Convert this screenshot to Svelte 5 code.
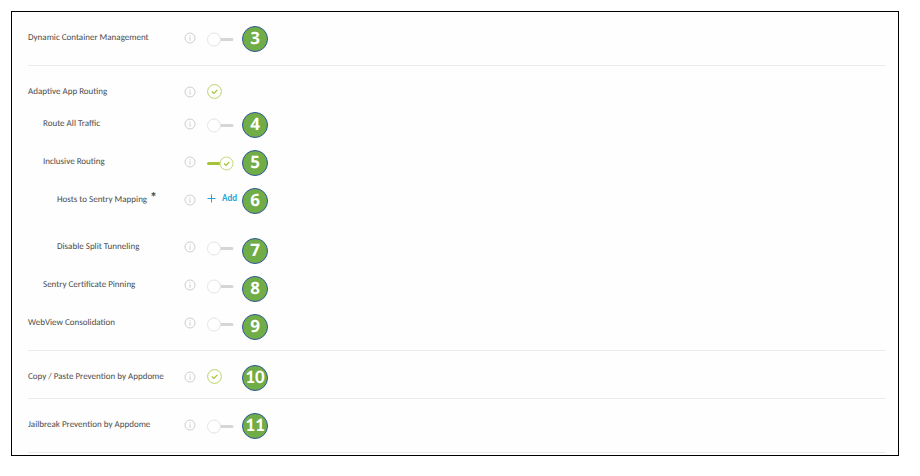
<script lang="ts">
  type Setting = {
    id: string;
    label: string;
    kind: 'switch' | 'check' | 'add';
    on?: boolean;
    level?: number;
    required?: boolean;
    step?: number;
    low?: boolean;
  };

  let groups = $state<Setting[][]>([
    [{ id: 'container', label: 'Dynamic Container Management', kind: 'switch', step: 3 }],
    [
      { id: 'routing', label: 'Adaptive App Routing', kind: 'check', on: true },
      { id: 'route-all', label: 'Route All Traffic', kind: 'switch', level: 1, step: 4 },
      { id: 'inclusive', label: 'Inclusive Routing', kind: 'switch', on: true, level: 1, step: 5 },
      { id: 'hosts', label: 'Hosts to Sentry Mapping', kind: 'add', level: 2, required: true, step: 6 },
      { id: 'split', label: 'Disable Split Tunneling', kind: 'switch', level: 2, step: 7, low: true },
      { id: 'pinning', label: 'Sentry Certificate Pinning', kind: 'switch', level: 1, step: 8, low: true },
      { id: 'webview', label: 'WebView Consolidation', kind: 'switch', step: 9, low: true }
    ],
    [{ id: 'copy-paste', label: 'Copy / Paste Prevention by Appdome', kind: 'check', on: true, step: 10 }],
    [{ id: 'jailbreak', label: 'Jailbreak Prevention by Appdome', kind: 'switch', step: 11 }]
  ]);
</script>

<main class="panel">
  {#each groups as group}
    <section class="group">
      {#each group as item (item.id)}
        <div class="row" class:mapping={item.kind === 'add'}>
          <label class="name level-{item.level ?? 0}" for={item.id}>
            {item.label}{#if item.required}<span class="required">*</span>{/if}
          </label>

          <button class="info" type="button" aria-label="About {item.label}">
            <svg width="12" height="12" viewBox="0 0 12 12" fill="none" stroke="#cfcfcf">
              <circle cx="6" cy="6" r="5" />
              <path d="M6 5.2v3.6M6 3.2v1.1" />
            </svg>
          </button>

          <div class="control">
            {#if item.kind === 'add'}
              <button class="add" type="button" id={item.id}>
                <svg width="9" height="9" viewBox="0 0 9 9" fill="none" stroke="#1fa5d6">
                  <path d="M4.5 0.5v8M0.5 4.5h8" />
                </svg>
                Add
              </button>
            {:else}
              <span class="toggle {item.kind}">
                <input type="checkbox" id={item.id} bind:checked={item.on} />
                {#if item.kind === 'check'}
                  <svg width="15" height="15" viewBox="0 0 15 15" fill="none">
                    <circle cx="7.5" cy="7.5" r="6.9" stroke={item.on ? '#b9d465' : '#dedede'} />
                    {#if item.on}
                      <path d="M4.8 7.5l2 1.9 3.6-3.6" stroke="#a3c436" stroke-width="1.2" />
                    {/if}
                  </svg>
                {:else if item.on}
                  <svg width="27" height="15" viewBox="0 0 27 15" fill="none">
                    <path d="M1.5 7.5h11.5" stroke="#a3c436" stroke-width="3" stroke-linecap="round" />
                    <circle cx="19.5" cy="7.5" r="6.5" fill="#fff" stroke="#c5db7f" />
                    <path d="M17 7.5l2 1.8 3.2-3.3" stroke="#a3c436" stroke-width="1.2" />
                  </svg>
                {:else}
                  <svg width="27" height="15" viewBox="0 0 27 15" fill="none">
                    <path d="M14 7.5h11" stroke="#d6d6d6" stroke-width="3" stroke-linecap="round" />
                    <circle cx="7" cy="7.5" r="6.5" fill="#fff" stroke="#e4e4e4" />
                  </svg>
                {/if}
              </span>
            {/if}
          </div>

          {#if item.step}
            <span class="step" class:low={item.low} class:double={item.step > 9}>{item.step}</span>
          {/if}
        </div>
      {/each}
    </section>
  {/each}
</main>

<style>
  :global(body) {
    background: #fff;
  }

  .panel {
    margin: 11px 21px 0 11px;
    padding: 0 12px 2px 16px;
    border: 1px solid #000;
    background: #fefefe;
    color: #4d4d4d;
    font-family: Carlito, Lato, "Liberation Sans", sans-serif;
    font-size: 9px;
    line-height: 14px;
    text-rendering: geometricPrecision;
  }

  .group {
    padding: 12px 0 15px;
    border-bottom: 1px solid #ebebeb;
  }

  .group:nth-child(2),
  .group:nth-child(3) {
    padding-bottom: 9px;
  }

  .row {
    display: grid;
    grid-template-columns: 156px 23px 35px 26px;
    grid-template-rows: 100%;
    align-items: center;
    height: 38px;
  }

  .row:first-child {
    height: 26px;
  }

  .row.mapping {
    margin-bottom: 9px;
  }

  .name {
    padding-top: 2px;
    white-space: nowrap;
  }

  .level-1 {
    padding-left: 15px;
  }

  .level-2 {
    padding-left: 29px;
  }

  .required {
    margin-left: 3px;
    font-size: 14px;
    font-weight: 700;
    line-height: 10px;
  }

  button {
    padding: 0;
    border: 0;
    background: none;
    font: inherit;
    cursor: pointer;
  }

  svg {
    display: block;
  }

  .info {
    justify-self: start;
    padding-top: 2px;
  }

  .toggle {
    position: relative;
    display: block;
    width: 27px;
  }

  .toggle.switch {
    padding-top: 4px;
  }

  .toggle input {
    position: absolute;
    inset: 0;
    width: 100%;
    height: 100%;
    margin: 0;
    opacity: 0;
    cursor: pointer;
  }

  .add {
    display: flex;
    align-items: center;
    gap: 6px;
    padding-bottom: 2px;
    color: #1fa5d6;
    font-weight: 700;
  }

  .step {
    width: 26px;
    height: 26px;
    margin-top: 4px;
    border: 1px solid #2f5597;
    border-radius: 50%;
    box-sizing: border-box;
    background: #70ad47;
    color: #fff;
    font-family: "Open Sans", "Noto Sans", sans-serif;
    font-size: 17px;
    font-weight: 700;
    line-height: 22px;
    text-align: center;
  }

  .step.low {
    margin-top: 10px;
  }

  .step.double {
    font-family: Carlito, Lato, sans-serif;
    font-size: 19px;
    line-height: 24px;
  }
</style>
